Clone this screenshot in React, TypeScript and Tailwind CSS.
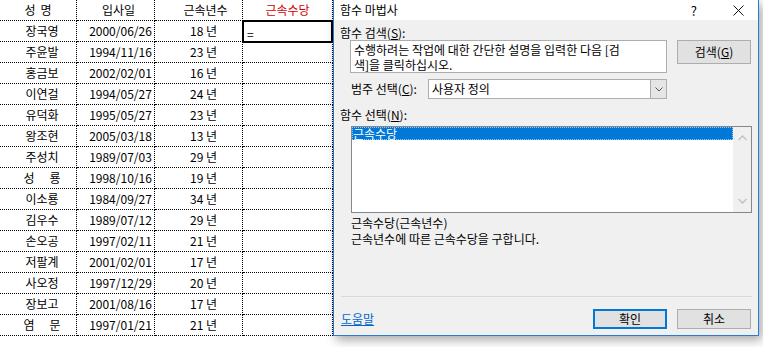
import React from "react";

const rows: [string, string, string][] = [
  ["장국영", "2000/06/26", "18 년"],
  ["주윤발", "1994/11/16", "23 년"],
  ["홍금보", "2002/02/01", "16 년"],
  ["이연걸", "1994/05/27", "24 년"],
  ["유덕화", "1995/05/27", "23 년"],
  ["왕조현", "2005/03/18", "13 년"],
  ["주성치", "1989/07/03", "29 년"],
  ["성룡", "1998/10/16", "19 년"],
  ["이소룡", "1984/09/27", "34 년"],
  ["김우수", "1989/07/12", "29 년"],
  ["손오공", "1997/02/11", "21 년"],
  ["저팔계", "2001/02/01", "17 년"],
  ["사오정", "1997/12/29", "20 년"],
  ["장보고", "2001/08/16", "17 년"],
  ["염문", "1997/01/21", "21 년"],
];

const cell =
  "h-[21px] border-r border-b border-dotted border-black flex items-center justify-center";

function Name({ n }: { n: string }) {
  if (n.length === 2) {
    return (
      <span className="w-[37px] flex justify-between">
        <span>{n[0]}</span>
        <span>{n[1]}</span>
      </span>
    );
  }
  return <span>{n}</span>;
}

export default function App() {
  return (
    <div
      className="relative w-[763px] h-[347px] bg-white overflow-hidden text-black"
      style={{ fontFamily: '"Noto Sans CJK KR", "Noto Sans", sans-serif' }}
    >
      {/* spreadsheet */}
      <div className="grid grid-cols-[77px_78px_88px_90px] text-[12px] leading-none">
        <div className={cell}>
          <span className="w-[27px] flex justify-between">
            <span>성</span>
            <span>명</span>
          </span>
        </div>
        <div className={cell + " pl-[6px]"}>입사일</div>
        <div className={cell + " pl-[14px]"}>근속년수</div>
        <div className={cell + " text-[#d40000]"}>근속수당</div>
        {rows.map((r, i) => (
          <React.Fragment key={i}>
            <div className={cell + " pl-[8px]"}>
              <Name n={r[0]} />
            </div>
            <div className={cell + " pl-[10px]"}>{r[1]}</div>
            <div className={cell + " pl-[10px]"}>{r[2]}</div>
            <div className={cell + " relative justify-start"}>
              {i === 0 && (
                <>
                  <div className="absolute -left-[1px] -top-[1px] w-[91px] h-[23px] border-2 border-black" />
                  <span className="pl-[4px] pt-[6px]">=</span>
                </>
              )}
            </div>
          </React.Fragment>
        ))}
      </div>

      {/* dialog */}
      <div className="absolute left-[333px] top-0 w-[426px] h-[336px] border-x border-b border-[#2b7bd4] bg-[#f0f0f0] shadow-[3px_4px_10px_rgba(0,0,0,0.35)] flex flex-col text-[12px]">
        <div className="h-[20px] bg-white flex items-center pl-[6px] pr-[14px]">
          <span className="leading-none">함수 마법사</span>
          <span className="ml-auto mr-[36px] text-[13px] leading-none">?</span>
          <svg width="11" height="11" viewBox="0 0 11 11" className="mt-[1px]">
            <path d="M0.5 0.5 L10.5 10.5 M10.5 0.5 L0.5 10.5" stroke="#111" strokeWidth="1" />
          </svg>
        </div>
        <div className="flex flex-col px-[6px]">
          <div className="mt-[5px] leading-[15px]">
            함수 검색(<span className="underline">S</span>):
          </div>
          <div className="flex items-start ml-[10px]">
            <div className="w-[317px] h-[33px] bg-white border border-[#adadad] px-[3px] pt-[1px] leading-[15px] text-[12px]">
              <div>수행하려는 작업에 대한 간단한 설명을 입력한 다음 [검</div>
              <div>색]을 클릭하십시오.</div>
            </div>
            <div className="ml-[10px] w-[74px] h-[24px] bg-[#e1e1e1] border border-[#adadad] flex items-center justify-center">
              검색(<span className="underline">G</span>)
            </div>
          </div>
          <div className="flex items-center ml-[11px] mt-[6px]">
            <span className="w-[77px] leading-none">
              범주 선택(<span className="underline">C</span>):
            </span>
            <div className="w-[239px] h-[20px] bg-white border border-[#adadad] flex items-center">
              <span className="pl-[3px] leading-none">사용자 정의</span>
              <div className="ml-auto w-[16px] h-full bg-[#e5e5e5] border-l border-[#adadad] flex items-center justify-center">
                <svg width="8" height="5" viewBox="0 0 8 5">
                  <path d="M0.5 0.5 L4 4 L7.5 0.5" fill="none" stroke="#555" strokeWidth="1" />
                </svg>
              </div>
            </div>
          </div>
          <div className="mt-[8px] leading-[15px]">
            함수 선택(<span className="underline">N</span>):
          </div>
          <div className="ml-[11px] mt-[4px] w-[401px] h-[87px] bg-white border border-[#828790] flex">
            <div className="flex-1">
              <div className="h-[13px] bg-[#0078d7] text-white border border-dotted border-[#9ec9ef] flex items-center">
                <span className="leading-none">근속수당</span>
              </div>
            </div>
            <div className="w-[18px] bg-[#f0f0f0] flex flex-col items-center justify-between py-[8px]">
              <svg width="9" height="6" viewBox="0 0 9 6">
                <path d="M0.5 5 L4.5 1 L8.5 5" fill="none" stroke="#c2c2c2" strokeWidth="1.5" />
              </svg>
              <svg width="9" height="6" viewBox="0 0 9 6">
                <path d="M0.5 1 L4.5 5 L8.5 1" fill="none" stroke="#c2c2c2" strokeWidth="1.5" />
              </svg>
            </div>
          </div>
          <div className="ml-[11px] mt-[2px] leading-[16px]">근속수당(근속년수)</div>
          <div className="ml-[11px] leading-[16px]">근속년수에 따른 근속수당을 구합니다.</div>
          <div className="mt-[49px] ml-[1px] w-[411px] h-px bg-[#d9d9d9]" />
          <div className="flex items-center mt-[12px] ml-[1px]">
            <span className="text-[#0066cc] underline leading-none">도움말</span>
            <div className="ml-auto w-[74px] h-[20px] bg-[#e1e1e1] border-2 border-[#0078d7] flex items-center justify-center leading-none">
              확인
            </div>
            <div className="ml-[10px] mr-[1px] w-[74px] h-[20px] bg-[#e1e1e1] border border-[#adadad] flex items-center justify-center leading-none">
              취소
            </div>
          </div>
        </div>
      </div>
    </div>
  );
}
